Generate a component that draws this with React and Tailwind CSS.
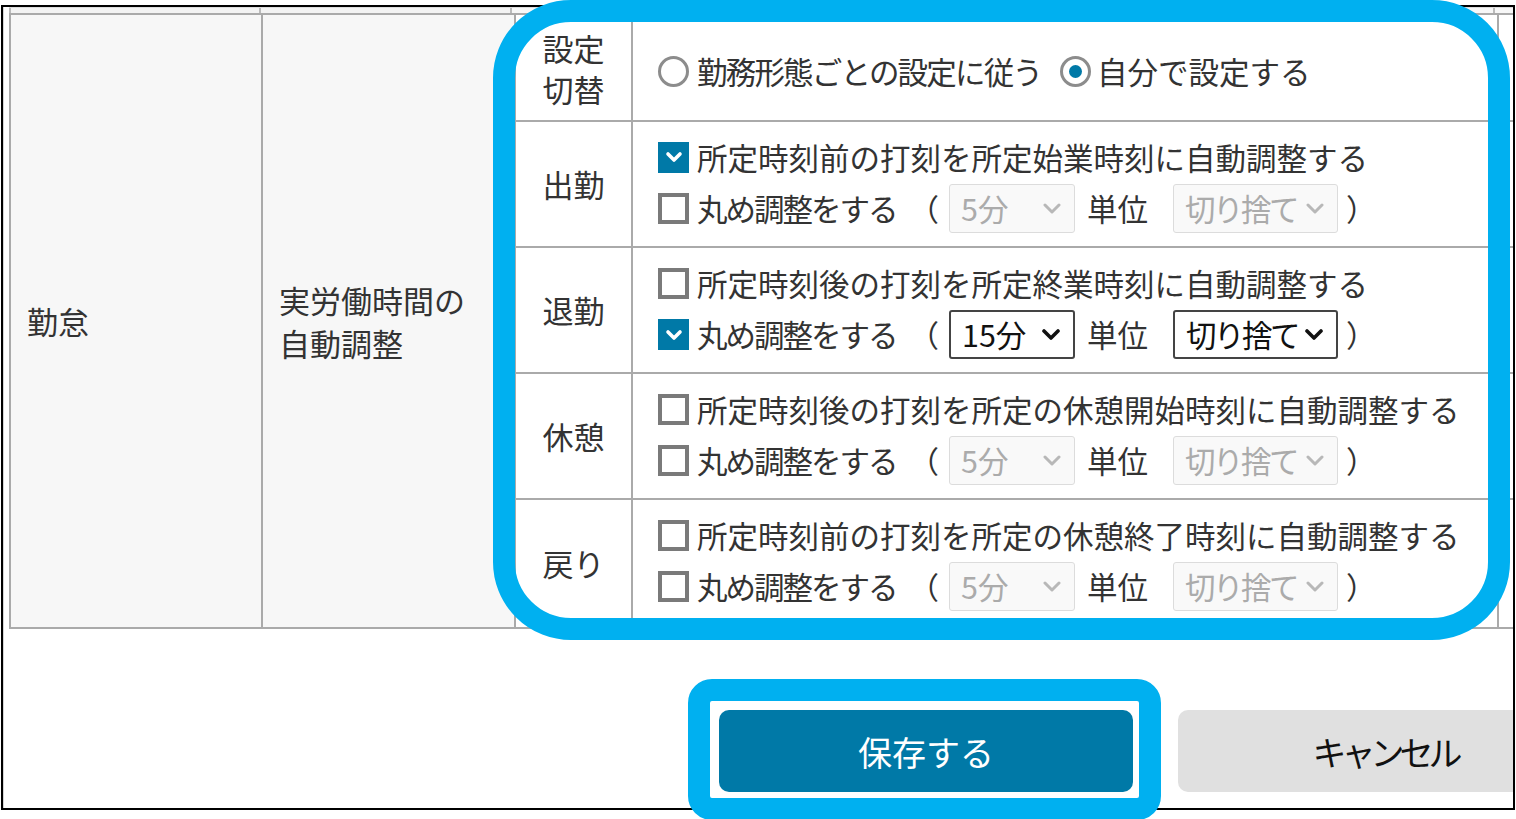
import React from "react";

function Chevron({ dark }) {
  return (
    <svg width="20" height="12" viewBox="0 0 20 12" className="shrink-0">
      <path
        d="M3 2 L10 9 L17 2"
        fill="none"
        stroke={dark ? "#111" : "#b8b8b8"}
        strokeWidth={dark ? 3.6 : 3}
        strokeLinecap="round"
        strokeLinejoin="round"
      />
    </svg>
  );
}

function Box({ checked }) {
  if (checked) {
    return (
      <span className="flex h-[31px] w-[31px] shrink-0 items-center justify-center bg-[#0079a7]">
        <svg width="20" height="14" viewBox="0 0 20 14">
          <path d="M4 4 L10 10 L16 4" fill="none" stroke="white" strokeWidth="3.6" strokeLinecap="round" strokeLinejoin="round" />
        </svg>
      </span>
    );
  }
  return <span className="block h-[31px] w-[31px] shrink-0 border-4 border-[#7a7a7a] bg-white" />;
}

function Radio({ checked }) {
  return (
    <span className="flex h-[31px] w-[31px] shrink-0 items-center justify-center rounded-full border-[3px] border-[#8c8c8c] bg-white">
      {checked && <span className="block h-[13px] w-[13px] rounded-full bg-[#0079a7]" />}
    </span>
  );
}

function Sel({ value, wide, enabled }) {
  const base = "flex h-[49px] shrink-0 items-center justify-between rounded-[3px] pl-[11px] pr-[12px]";
  const width = wide ? "w-[165px]" : "w-[126px]";
  const look = enabled
    ? "border-2 border-[#444] bg-white text-[#111]"
    : "border border-[#dcdcdc] bg-[#f9f9f9] text-[#ababab]";
  return (
    <span className={`${base} ${width} ${look}`}>
      <span className={wide ? "tracking-[-2.5px]" : ""}>{value}</span>
      <Chevron dark={enabled} />
    </span>
  );
}

function Row({ line1, c1, c2, minute, enabled, last }) {
  return (
    <div className={`flex ${last ? "h-[127px]" : "h-[126px] border-b-2 border-[#aaa]"}`}>
      <div className="flex w-[117px] shrink-0 items-center justify-center border-r-2 border-[#aaa] text-[31px] text-[#333]">
        {line1.label}
      </div>
      <div className="flex w-[866px] shrink-0 flex-col gap-[11px] border-r-2 border-[#aaa] pl-[25px] pt-[19px] text-[30.5px] leading-none text-[#333]">
        <div className="flex h-[32px] items-center">
          <Box checked={c1} />
          <span className="ml-[8px] whitespace-nowrap">{line1.text}</span>
        </div>
        <div className="flex h-[49px] items-center whitespace-nowrap">
          <Box checked={c2} />
          <span className="ml-[8px] tracking-[-2px]">丸め調整をする</span>
          <span className="ml-[12px]">（</span>
          <span className="ml-[10px]">
            <Sel value={minute} enabled={enabled} />
          </span>
          <span className="ml-[12px]">単位</span>
          <span className="ml-[25px]">
            <Sel value="切り捨て" wide enabled={enabled} />
          </span>
          <span className="ml-[8px]">）</span>
        </div>
      </div>
      <div className="flex-1 bg-white" />
    </div>
  );
}

export default function App() {
  return (
    <div className="relative h-[819px] w-[1516px] overflow-hidden bg-white font-['Noto_Sans_CJK_JP','Noto_Sans',sans-serif]">
      <div className="ml-[1px] mt-[5px] h-[805px] w-[1514px] overflow-hidden border-2 border-black">
        <div className="h-full border-l border-[#d4d4d4] pl-[5px]">
          {/* strip of the row above */}
          <div className="flex h-[6px] border-t border-[#dcdcdc]">
            <div className="w-[252px] shrink-0 border-l-2 border-r-2 border-[#bbb] bg-[#f3f3f3]" />
            <div className="w-[251px] shrink-0 border-r-2 border-[#bbb] bg-[#f3f3f3]" />
            <div className="w-[983px] shrink-0 border-r-2 border-[#bbb] bg-[#f7f7f7]" />
            <div className="flex-1 bg-[#f7f7f7]" />
          </div>

          {/* main table */}
          <div className="flex border-y-2 border-l-2 border-[#aaa]">
            <div className="flex w-[252px] shrink-0 items-center border-r-2 border-[#aaa] bg-[#f7f7f7] pl-[16px] text-[31px] text-[#333]">
              勤怠
            </div>
            <div className="flex w-[253px] shrink-0 items-center border-r-2 border-[#aaa] bg-[#f7f7f7] pl-[16px] text-[31px] leading-[43px] text-[#333]">
              <div>
                実労働時間の
                <br />
                自動調整
              </div>
            </div>
            <div className="flex flex-1 flex-col bg-white">
              <div className="flex h-[107px] border-b-2 border-[#aaa]">
                <div className="flex w-[117px] shrink-0 items-center justify-center border-r-2 border-[#aaa] text-center text-[31px] leading-[41px] text-[#333]">
                  <div>
                    設定
                    <br />
                    切替
                  </div>
                </div>
                <div className="flex w-[866px] shrink-0 items-center border-r-2 border-[#aaa] pl-[25px] pt-[7px] text-[30.5px] leading-none text-[#333]">
                  <Radio />
                  <span className="ml-[8px] whitespace-nowrap tracking-[-1.8px]">勤務形態ごとの設定に従う</span>
                  <span className="ml-[19px]">
                    <Radio checked />
                  </span>
                  <span className="ml-[6px] whitespace-nowrap">自分で設定する</span>
                </div>
                <div className="flex-1 bg-white" />
              </div>
              <Row line1={{ label: "出勤", text: "所定時刻前の打刻を所定始業時刻に自動調整する" }} c1 c2={false} minute="5分" enabled={false} />
              <Row line1={{ label: "退勤", text: "所定時刻後の打刻を所定終業時刻に自動調整する" }} c1={false} c2 minute="15分" enabled />
              <Row line1={{ label: "休憩", text: "所定時刻後の打刻を所定の休憩開始時刻に自動調整する" }} c1={false} c2={false} minute="5分" enabled={false} />
              <Row line1={{ label: "戻り", text: "所定時刻前の打刻を所定の休憩終了時刻に自動調整する" }} c1={false} c2={false} minute="5分" enabled={false} last />
            </div>
          </div>

          {/* buttons */}
          <div className="mt-[81px] flex">
            <button className="ml-[710px] flex h-[82px] w-[414px] shrink-0 items-center justify-center rounded-[10px] bg-[#0079a7] text-[34px] text-white">
              保存する
            </button>
            <button className="ml-[45px] flex h-[82px] w-[414px] shrink-0 items-center justify-center rounded-[10px] bg-[#e0e0e0] text-[34px] tracking-[-5px] text-[#111]">
              キャンセル
            </button>
          </div>
        </div>
      </div>

      {/* annotation highlights */}
      <div className="pointer-events-none absolute left-[493px] top-0 h-[640px] w-[1017px] rounded-[78px] border-[22px] border-[#00b0f0]" />
      <div className="pointer-events-none absolute left-[688px] top-[679px] h-[141px] w-[473px] rounded-[24px] border-[22px] border-[#00b0f0]" />
    </div>
  );
}
